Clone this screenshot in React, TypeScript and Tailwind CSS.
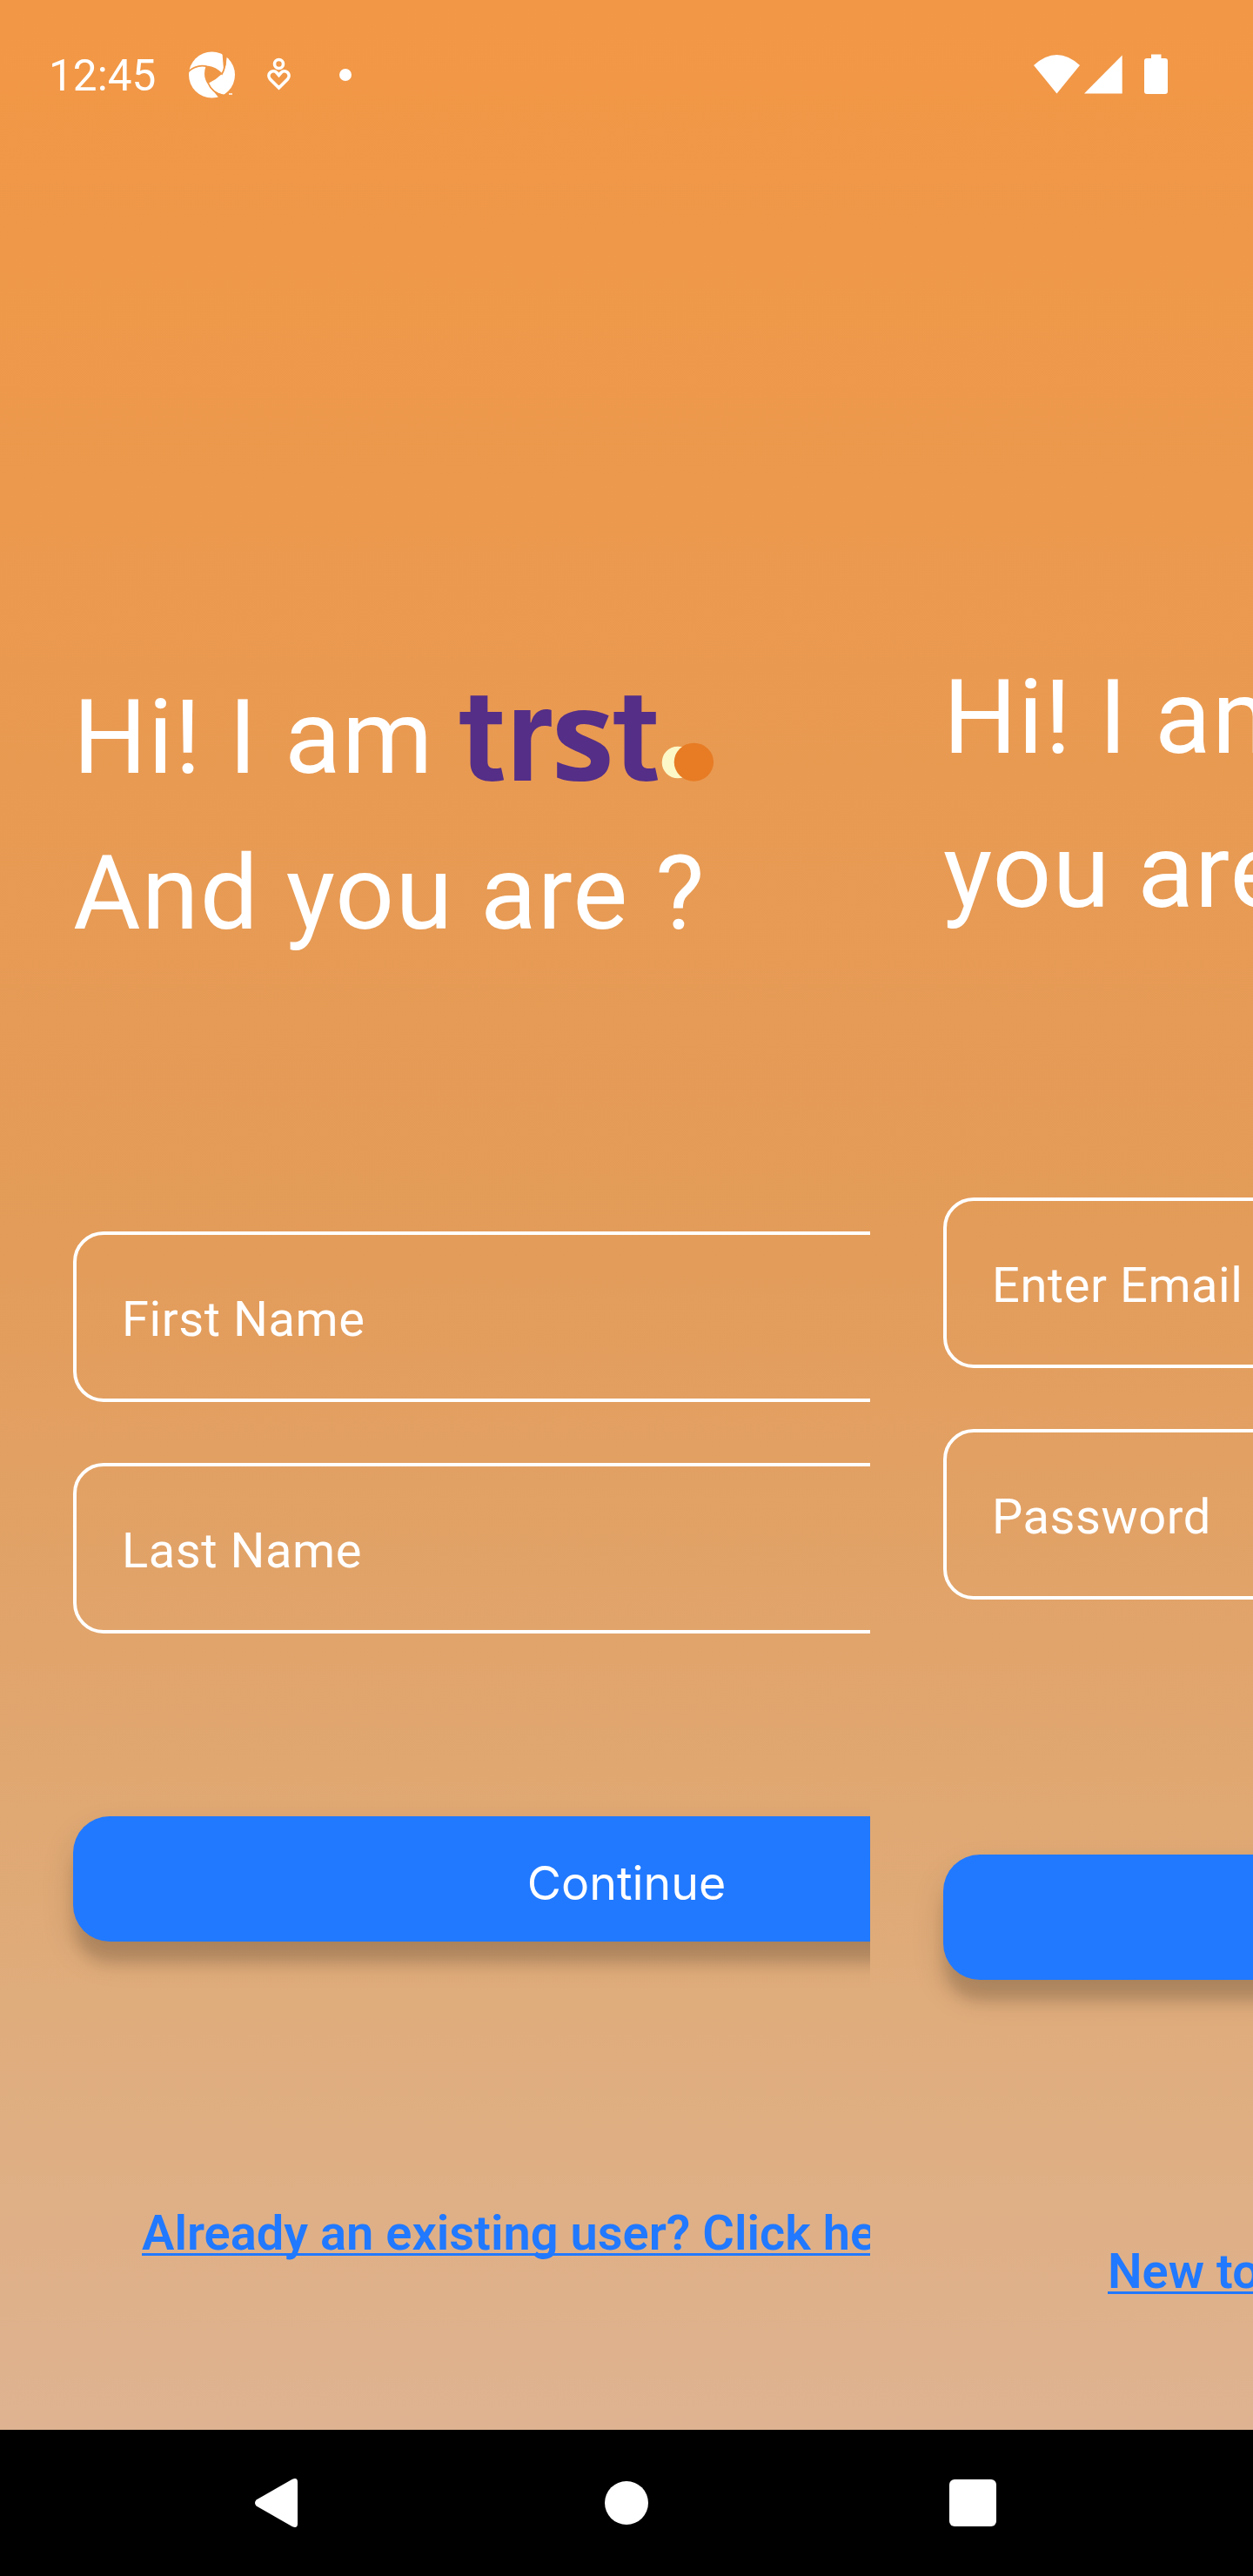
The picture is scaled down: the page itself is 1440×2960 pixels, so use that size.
import React from 'react';

function StatusBar() {
  return (
    <header className="flex h-[168px] shrink-0 items-start justify-between pt-[58px] pl-[56px] pr-[98px] text-white">
      <div className="flex h-[56px] items-center">
        <span className="w-[160px] whitespace-nowrap pt-[2px] text-[49.5px] leading-[56px]">12:45</span>
        <svg className="h-[54px] w-[56px]" viewBox="0 0 56 54" fill="none">
          <circle cx="27.5" cy="27" r="26.5" fill="#fff" />
          <path d="M21.5 17.3 Q31.5 18.3 39 26 Q32.5 32.5 23.5 36.7 Q18 27.5 21.5 17.3Z" fill="#f09745" />
          <path d="M0 23.5 Q10 14.5 22 17.3 Q32 18.5 39 26 Q44.5 17 42.5 1" stroke="#f09745" strokeWidth="1.8" />
          <path d="M21.5 17 Q17.5 28 23.5 37 Q28 48 42 51" stroke="#f09745" strokeWidth="1.8" />
          <path d="M39.5 2 L45 4 L43.5 16 L41 21Z M23 38 L32 47 L42 50 L36 54Z" fill="#f09745" />
          <path d="M47 49h4" stroke="#fff" strokeWidth="1.5" />
        </svg>
        <svg className="ml-[34px] h-[40px] w-[30px]" viewBox="0 0 30 40" fill="none" stroke="#fff" strokeWidth="3.6">
          <circle cx="14.5" cy="7.5" r="5" />
          <path d="M14.5 35 L4.5 25 C-0.5 19 7.5 12.5 12 17.5 L14.5 20.5 L17 17.5 C21.5 12.5 29.5 19 24.5 25Z" />
        </svg>
        <span className="ml-[54px] size-[14px] rounded-full bg-white" />
      </div>
      <svg className="mt-[3px] h-[48px] w-[154px]" viewBox="0 0 154 48" fill="#fff">
        <path d="M0 14 Q26.5 -10 53 14 L26.5 46.5Z" />
        <path d="M58 46.5 L101.7 2.5 V46.5Z" />
        <path d="M135 1.5h11.5v4.5h4.5a3 3 0 0 1 3 3v35a3 3 0 0 1-3 3h-21a3 3 0 0 1-3-3v-35a3 3 0 0 1 3-3h5z" />
      </svg>
    </header>
  );
}

function Logo() {
  return (
    <svg className="mt-[4px] ml-[16px] h-[120px] w-[320px] shrink-0 tracking-normal" viewBox="515 790 320 120" fill="#542e87">
      <text transform="translate(527 897) scale(1.08 1)" fontSize="144" fontWeight="600" fontFamily="Inter, sans-serif">t</text>
      <text transform="translate(583 897) scale(0.88 1)" fontSize="148" fontWeight="700" fontFamily="Inter, sans-serif">r</text>
      <text transform="translate(633.5 897)" fontSize="146" fontWeight="700" fontFamily="Open Sans, sans-serif">s</text>
      <text transform="translate(704 897) scale(1.08 1)" fontSize="144" fontWeight="600" fontFamily="Inter, sans-serif">t</text>
      <circle cx="779" cy="876" r="18.3" fill="#fcf8c8" />
      <ellipse cx="797.4" cy="875.7" rx="22.7" ry="22" fill="#e77c25" />
    </svg>
  );
}

function Field({ label }: { label: string }) {
  return (
    <div className="flex h-[196px] items-center rounded-[35px] border-4 border-white pl-[52px] pt-[6px] text-[56px] tracking-[0.01em] text-white">
      {label}
    </div>
  );
}

function ActionButton({ label }: { label: string }) {
  return (
    <button className="flex h-[144px] w-full shrink-0 items-center justify-center rounded-[42px] bg-[#2179ff] pt-[10px] font-[Inter,sans-serif] text-[53.7px] text-white shadow-[0_26px_16px_-2px_rgba(0,0,0,0.14),0_18px_38px_0_rgba(0,0,0,0.13)]">
      {label}
    </button>
  );
}

const linkClass =
  'whitespace-nowrap text-[56px] leading-[66px] font-semibold text-[#2179ff] underline decoration-[3px] underline-offset-[4px] [text-decoration-skip-ink:none]';

const headingClass = 'whitespace-nowrap text-[119px] text-white tracking-[0.01em]';

export default function App() {
  return (
    <div className="flex h-[2960px] w-[1440px] flex-col overflow-hidden bg-black font-[Roboto,sans-serif]">
      <div className="flex h-[2792px] shrink-0 flex-col bg-[linear-gradient(180deg,#f29745_0%,#e39c5a_52%,#dfac7b_82%,#dfb391_100%)]">
        <StatusBar />
        <main className="flex min-h-0 flex-1">
          <section className="w-[1000px] shrink-0 overflow-hidden pl-[84px] pt-[590px]">
            <div className="flex w-[1272px] flex-col">
              <h1 className={headingClass}>
                <span className="flex h-[179px] items-center leading-[179px]">
                  Hi! I am
                  <Logo />
                </span>
                <span className="block leading-[179px]">And you are ?</span>
              </h1>
              <div className="mt-[299px] flex flex-col gap-[70px]">
                <Field label="First Name" />
                <Field label="Last Name" />
              </div>
              <div className="mt-[210px]">
                <ActionButton label="Continue" />
              </div>
              <a className={`${linkClass} mt-[302px] ml-[79px]`}>Already an existing user? Click here</a>
            </div>
          </section>
          <section className="w-[440px] shrink-0 overflow-hidden pl-[84px] pt-[568px]">
            <div className="flex w-[1272px] flex-col">
              <h1 className={`${headingClass} leading-[177px]`}>
                Hi! I am trst. And
                <br />
                you are?
              </h1>
              <div className="mt-[286px] flex flex-col gap-[70px]">
                <Field label="Enter Email" />
                <Field label="Password" />
              </div>
              <div className="mt-[293px]">
                <ActionButton label="Login" />
              </div>
              <a className={`${linkClass} mt-[302px] ml-[189px]`}>New to trst? Click here</a>
            </div>
          </section>
        </main>
      </div>
      <nav className="flex h-[168px] shrink-0 items-center bg-black pl-[293px]">
        <svg className="h-[58px] w-[50px]" viewBox="0 0 50 58" fill="#fff">
          <path d="M1.5 25.5 L43 1.8 Q49 -0.5 49 5 V53 Q49 58.5 43 56.2 L1.5 32.5 Q-1.5 29 1.5 25.5Z" />
        </svg>
        <span className="ml-[352px] size-[50px] rounded-full bg-white" />
        <span className="ml-[346px] size-[54px] rounded-[6px] bg-white" />
      </nav>
    </div>
  );
}
